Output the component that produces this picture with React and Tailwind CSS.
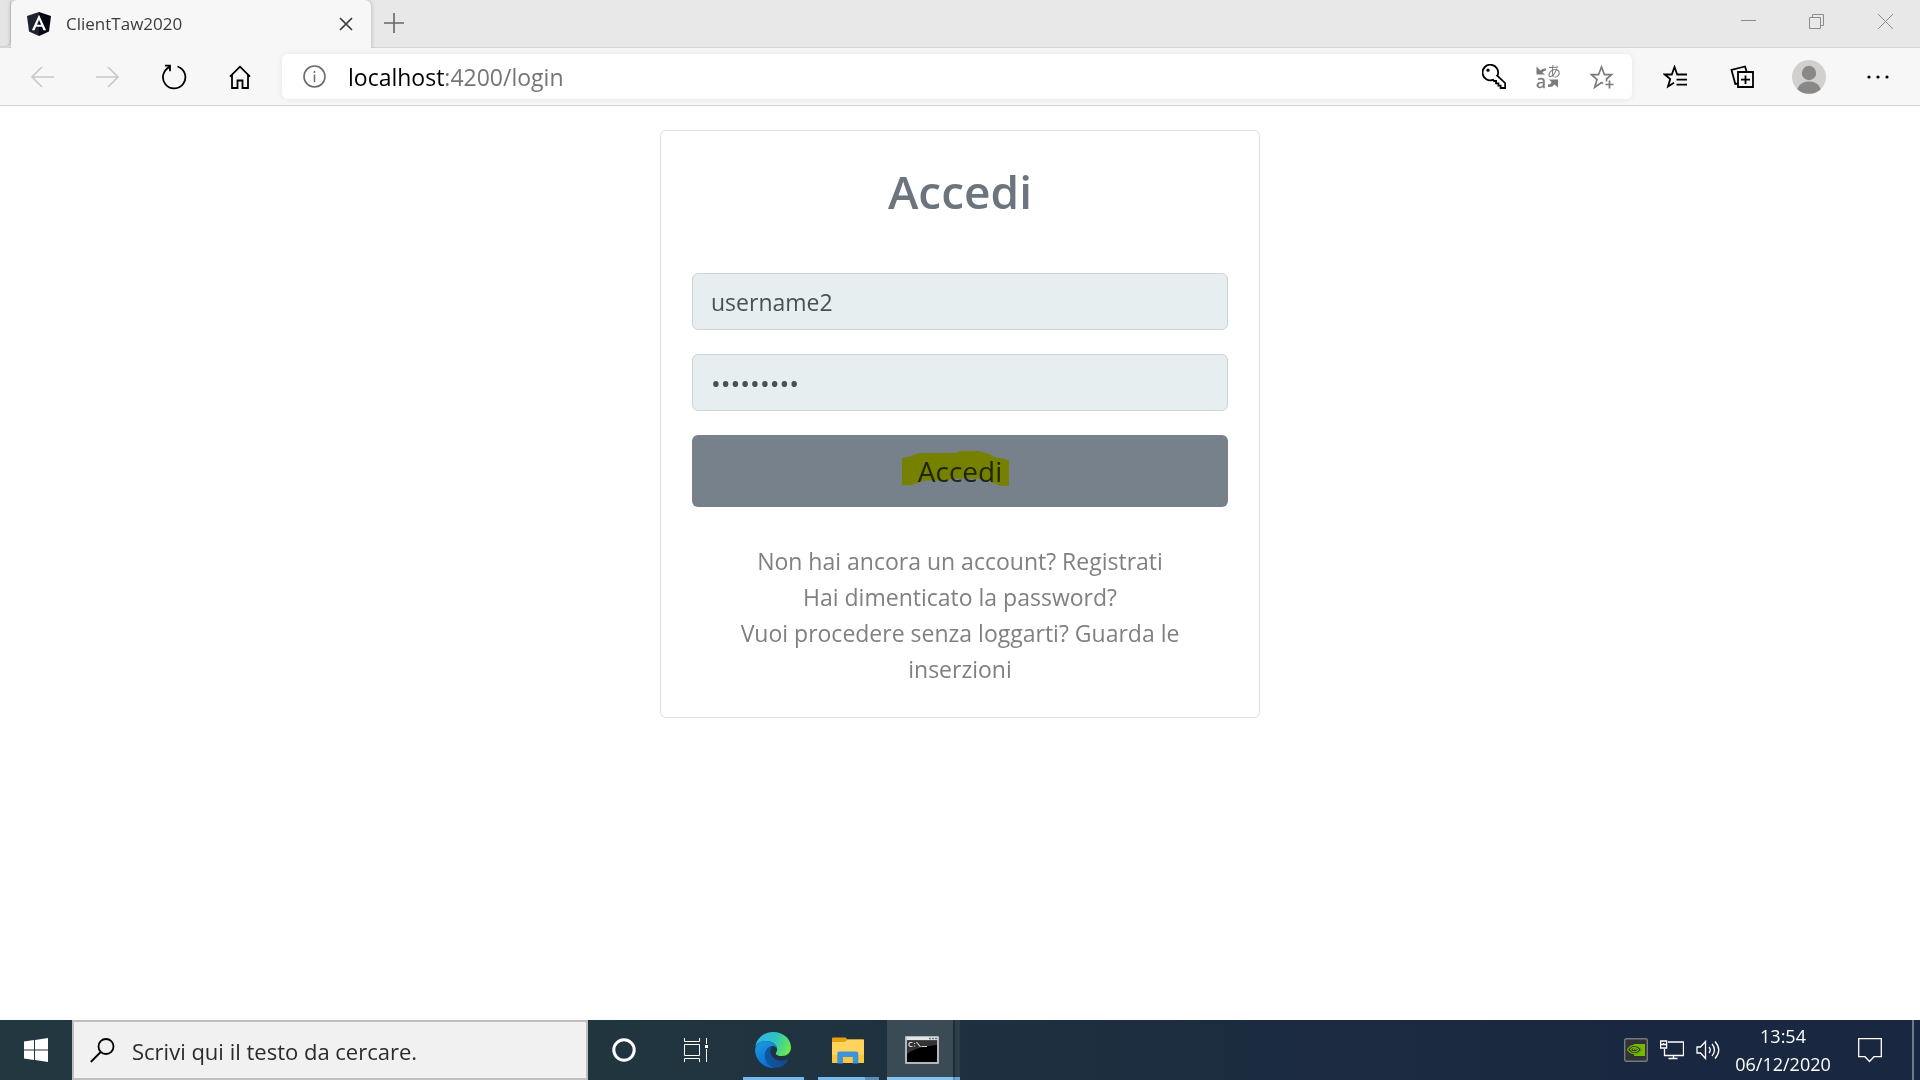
const iconButton = "flex h-[45px] items-center justify-center";

function Stroke({ w, h, width = 2, className = "", children }) {
  return (
    <svg
      width={w}
      height={h}
      viewBox={`0 0 ${w} ${h}`}
      fill="none"
      stroke="currentColor"
      strokeWidth={width}
      className={className}
      aria-hidden="true"
    >
      {children}
    </svg>
  );
}

function AngularLogo() {
  return (
    <svg width="24" height="24" viewBox="0 0 24 24" aria-hidden="true">
      <path d="M12 0 0 4l2 15.500L12 24z" fill="#1d2230" />
      <path d="M12 0 24 4l-2 15.500L12 24z" fill="#050711" />
      <path d="M12 2.800 4.900 18.200h2.700l1.400-3.500h6l1.400 3.500h2.700zm0 5 2.100 4.900H9.900z" fill="#fff" />
    </svg>
  );
}

function TitleBar() {
  return (
    <header className="flex h-12 items-stretch border-b border-[#d6d6d6] bg-[#e8e8e8]">
      <div className="h-[47px] w-[11px] rounded-br-md border-r border-b border-[#cfcfcf] bg-[#e4e4e4]" />
      <div className="-mb-px flex w-[360px] items-center rounded-t-md bg-[#f7f7f7] pr-[18px] pl-4 shadow-[0_0_4px_rgba(0,0,0,0.25)] [clip-path:inset(0_-5px_0_-5px)]">
        <AngularLogo />
        <span className="ml-[15px] flex-1 text-[17px] text-[#3c3c3c]">ClientTaw2020</span>
        <button type="button" aria-label="Chiudi scheda" className="text-[#3a3a3a]">
          <Stroke w={14} h={14} width={1.700}>
            <path d="m1 1 12 12M13 1 1 13" />
          </Stroke>
        </button>
      </div>
      <button type="button" aria-label="Nuova scheda" className="px-[13px] pb-0.5 text-[#666]">
        <Stroke w={20} h={20} width={1.600}>
          <path d="M10 0v20M0 10h20" />
        </Stroke>
      </button>
      <div className="flex-1" />
      <div className="mb-1 flex items-center text-[#8c8c8c]">
        <button type="button" aria-label="Riduci a icona" className="flex w-[68px] justify-center pb-0.5">
          <Stroke w={15} h={1}>
            <path d="M0 .5h15" />
          </Stroke>
        </button>
        <button type="button" aria-label="Ripristina" className="flex w-[68px] justify-center">
          <Stroke w={15} h={15} width={1}>
            <path d="M.5 3.500h11v11H.5zM3.500 3.500v-3h11v11h-3" />
          </Stroke>
        </button>
        <button type="button" aria-label="Chiudi" className="flex w-[70px] justify-center">
          <Stroke w={15} h={15} width={1}>
            <path d="m0 0 15 15M15 0 0 15" />
          </Stroke>
        </button>
      </div>
    </header>
  );
}

function AddressBar() {
  return (
    <div className="flex h-[45px] flex-1 items-center rounded-md bg-white pr-[18px] pl-[21px] shadow-[0_0_6px_rgba(0,0,0,0.08)]">
      <Stroke w={23} h={23} className="text-[#6b6b6b]">
        <circle cx="11.500" cy="11.500" r="10.500" strokeWidth="1.600" />
        <path d="M11.500 9.500v7.500M11.500 6v2" strokeWidth="1.500" />
      </Stroke>
      <a href="#login" className="ml-[22px] flex-1 pt-0.5 text-[23px] text-[#757575]">
        <span className="text-black">localhost</span>:4200/login
      </a>
      <div className="flex items-center gap-[30px]">
        <button type="button" aria-label="Password salvate">
          <Stroke w={24} h={25} width={1.800}>
            <path d="M15.600 11.300a7.800 7.800 0 1 0-4.500 4.500l1 1.200h2v2.400h2.300v2.300h2.200V24h4.600v-4.800l-8-7.600z" />
            <circle cx="6" cy="6.200" r="1.600" fill="currentColor" stroke="none" />
          </Stroke>
        </button>
        <button type="button" aria-label="Traduci" className="text-[#7b7b7b]">
          <svg width="24" height="26" viewBox="0 0 24 26" fill="currentColor" className="overflow-visible" aria-hidden="true">
            <text x="11" y="12" fontSize="14" fontFamily="'Noto Sans CJK JP', sans-serif">あ</text>
            <text x="0" y="24" fontSize="18" fontFamily="'Open Sans', sans-serif" stroke="currentColor" strokeWidth=".4">a</text>
            <path d="M.5 2.500V10.500h8.500L6.500 8.500Q7.500 6.500 10 6.500V4.500Q6.500 4 4.500 6.500zM22 23.500v-8h-9l2.500 2.500Q15 20.500 12 20.500v2.500q4.500.5 6.500-2.500z" />
          </svg>
        </button>
        <button type="button" aria-label="Aggiungi ai preferiti" className="text-[#7b7b7b]">
          <Stroke w={24} h={24} width={1.700}>
            <path d="M13 18.500 11.500 17.500 4.700 22.300 7 14.500 1.500 9.700h7L11.500 2l3 7.700h7L16.500 14v2.500" />
            <path d="M19.500 15.500v8M15.500 19.500h8" />
          </Stroke>
        </button>
      </div>
    </div>
  );
}

function Toolbar() {
  return (
    <nav aria-label="Navigazione" className="flex h-[58px] items-center border-b border-[#cfcfcf] bg-[#f7f7f7] pl-[9px] text-black">
      <button type="button" aria-label="Indietro" className={`${iconButton} w-[66px] text-[#c9c9c9]`}>
        <Stroke w={24} h={22} width={1.700}>
          <path d="M24 11H2M12 1 2 11l10 10" />
        </Stroke>
      </button>
      <button type="button" aria-label="Avanti" className={`${iconButton} w-[66px] text-[#c9c9c9]`}>
        <Stroke w={24} h={22} width={1.700}>
          <path d="M0 11h22M12 1l10 10-10 10" />
        </Stroke>
      </button>
      <button type="button" aria-label="Aggiorna" className={`${iconButton} w-[66px]`}>
        <Stroke w={26} h={26} width={1.800}>
          <path d="M16.500 2.500a11.200 11.200 0 1 1-7.500.3M4 1.700h5v5.600" />
        </Stroke>
      </button>
      <button type="button" aria-label="Pagina iniziale" className={`${iconButton} w-[66px]`}>
        <Stroke w={22} h={24} width={1.800}>
          <path d="M1 11.700 11 1.700l10 10M3 9.800V23h5.500v-7.500h5V23H19V9.800" />
        </Stroke>
      </button>
      <div className="ml-[9px] flex flex-1">
        <AddressBar />
      </div>
      <div className="flex items-center pr-[7px] pl-[9px]">
        <button type="button" aria-label="Preferiti" className={`${iconButton} w-[68px]`}>
          <Stroke w={24} h={24} width={1.800}>
            <path d="M11 17.700 5 21.500 7.200 14 1.800 9.500h7L11.500 2l2.700 7.500M13.500 9.500H24M13.500 14.700H24M13.500 19.700H24" />
          </Stroke>
        </button>
        <button type="button" aria-label="Raccolte" className={`${iconButton} w-[66px]`}>
          <Stroke w={24} h={24} width={1.800}>
            <path d="M8 7h15v15H8zM15.500 10.500v8.500M11 14.700h9M16.500 6 15 1.500 1.500 5 5.300 19 8 18.500" />
          </Stroke>
        </button>
        <button type="button" aria-label="Profilo" className={`${iconButton} w-[68px]`}>
          <svg width="34" height="34" viewBox="0 0 34 34" aria-hidden="true">
            <circle cx="17" cy="17" r="17" fill="#d2d0ce" />
            <circle cx="17" cy="13" r="7.200" fill="#8a8886" />
            <path d="M5.300 29.200C7 24 11.500 21.500 17 21.500S27 24 28.700 29.200A17 17 0 0 1 5.300 29.200z" fill="#8a8886" />
          </svg>
        </button>
        <button type="button" aria-label="Altro" className={`${iconButton} w-[70px]`}>
          <svg width="22" height="4" viewBox="0 0 22 4" aria-hidden="true">
            <circle cx="2" cy="2" r="1.600" />
            <circle cx="11" cy="2" r="1.600" />
            <circle cx="20" cy="2" r="1.600" />
          </svg>
        </button>
      </div>
    </nav>
  );
}

const field =
  "h-[57px] w-full rounded-md border border-[#ced4da] bg-[#e6eeef] px-[18px] text-[#495057] outline-none";

function LoginCard() {
  return (
    <section className="w-[600px] rounded-md border border-[#dfdfdf] bg-white px-[31px] pt-[30px] pb-[30px]">
      <h1 className="text-center text-[46px] leading-[60px] font-semibold text-[#6c757d]">Accedi</h1>
      <form className="mt-[52px] flex flex-col gap-6" onSubmit={(e) => e.preventDefault()}>
        <input type="text" aria-label="Username" defaultValue="username2" className={`${field} text-[23px]`} />
        <input type="password" aria-label="Password" defaultValue="password2" className={`${field} text-[26px]`} />
        <button type="submit" className="h-[72px] w-full rounded-md bg-[#76818c] text-[28px] text-[#212529]">
          <span className="relative inline-block">
            Accedi
            <svg
              width="107"
              height="35"
              viewBox="0 0 107 35"
              className="absolute top-px -left-4 mix-blend-multiply"
              aria-hidden="true"
            >
              <path
                d="M0 7 8 5.500 13 3.500 18 2h35l5-2h19l9 2.500 8 4 7 1 6 2v26h-8l-6-3-7-3-12-2H52l-6 2H23l-9 3-5 1.500-9 .5z"
                fill="#ff0"
              />
            </svg>
          </span>
        </button>
      </form>
      <div className="mt-9 px-6 text-center text-[23px] leading-9 text-[#808080]">
        <p>
          <a href="#registrati">Non hai ancora un account? Registrati</a>
        </p>
        <p>
          <a href="#password">Hai dimenticato la password?</a>
        </p>
        <p>
          <a href="#inserzioni">Vuoi procedere senza loggarti? Guarda le inserzioni</a>
        </p>
      </div>
    </section>
  );
}

function EdgeLogo() {
  return (
    <svg width="36" height="36" viewBox="0 0 36 36" aria-hidden="true">
      <defs>
        <linearGradient id="edgeTop" x1="0" y1="0.300" x2="1" y2="0.600">
          <stop offset="0" stopColor="#2fb4ec" />
          <stop offset="0.500" stopColor="#2cc4c0" />
          <stop offset="1" stopColor="#6bea4c" />
        </linearGradient>
        <linearGradient id="edgeLeft" x1="0" y1="0" x2="0.500" y2="1">
          <stop offset="0" stopColor="#1b9de2" />
          <stop offset="1" stopColor="#0a6fd0" />
        </linearGradient>
        <linearGradient id="edgeDark" x1="0" y1="0" x2="1" y2="0">
          <stop offset="0" stopColor="#0c59a4" />
          <stop offset="1" stopColor="#114a8b" />
        </linearGradient>
      </defs>
      <path d="M.3 15C1.500 6 9 0 18 0c10.500 0 18 7 18 15.500C36 20.500 32 24 27 24c-4 0-6.200-1.200-6.200-2.600 0-1 1.400-1.700 1.400-4.200 0-4.500-5-8.200-11-8.200C5.500 9 1.500 11.500.3 15z" fill="url(#edgeTop)" />
      <path d="M.1 18C.1 12.500 5 9 11.200 9c6.300 0 11 3.800 11 8.200-1-2.300-3-3.500-5-3.200-4.500.7-7.200 5-7.200 9.500 0 5.500 3.500 10.300 9.500 12.400C9 36.600.1 28 .1 18z" fill="url(#edgeLeft)" />
      <path d="M17.500 14C13 15 10 19 10 23.500c0 6.500 4.500 12 11 12.200 5 .1 9.500-3.200 12-7.500.5-.9-.2-1.400-1-.9C25 31 15.500 27 15.500 19.500c0-2.500.8-4.500 2-5.500z" fill="url(#edgeDark)" />
    </svg>
  );
}

function FolderIcon() {
  return (
    <svg width="32" height="27" viewBox="0 0 32 27" aria-hidden="true">
      <path d="M0 1.500Q0 .5 1 .5h12.500l2 2H32V8H0z" fill="#e5a00d" />
      <path d="M0 5h13l2.500-2.500H31q1 0 1 1V25q0 1-1 1H1q-1 0-1-1z" fill="#ffd35c" />
      <path d="M0 18h32v7q0 1-1 1H1q-1 0-1-1z" fill="#fbc73b" />
      <path d="M5.300 26.500V16.500q0-2 2-2h17q2 0 2 2v10h-5.500V20H11v6.500z" fill="#3b94dc" />
    </svg>
  );
}

function TerminalIcon() {
  return (
    <svg width="34" height="28" viewBox="0 0 34 28" aria-hidden="true">
      <rect width="34" height="28" rx="1" fill="#b4b8bb" />
      <path d="M1.500 1h31v3h-31z" fill="#e3e6e8" />
      <path d="M24 1.700h2v1.500h-2zm3 0h2v1.500h-2zm3 0h2v1.500h-2z" fill="#64727c" />
      <path d="M2 4.500h30V26H2z" fill="#000" />
      <path d="M2 4.500h30V9C18 10 8 13 2 18z" fill="#333" />
      <path d="M7.500 6.500H5l-1 1v2l1 1h2.500M9.500 7v1M9.500 9.500v1M11.500 6l4 5M16.500 10.500H22" fill="none" stroke="#d5d5d5" strokeWidth="1.200" />
    </svg>
  );
}

function Taskbar() {
  return (
    <footer className="flex h-[60px] items-stretch bg-linear-to-r from-[#22373f] from-25% to-[#1a2740] to-85% text-white">
      <button type="button" aria-label="Start" className="flex w-[72px] items-center justify-center">
        <svg width="24" height="24" viewBox="0 0 24 24" fill="#fff" aria-hidden="true">
          <path d="M0 3.500 10 2v9.500H0zM11 1.900 24 0v11.500H11zM0 12.500h10V22L0 20.500zM11 12.500h13V24L11 22.100z" />
        </svg>
      </button>
      <label className="flex w-[516px] items-center border-2 border-[#bfbfbf] bg-[#f1f1f1] pl-4 text-black">
        <Stroke w={25} h={25} width={1.800}>
          <circle cx="16" cy="8.500" r="7.500" />
          <path d="M10.700 14 .8 24" />
        </Stroke>
        <input
          type="text"
          aria-label="Cerca"
          placeholder="Scrivi qui il testo da cercare."
          className="ml-[17px] h-full min-w-0 flex-1 pt-0.5 text-[22px] outline-none placeholder:text-[#2b2b2b] placeholder:opacity-100"
        />
      </label>
      <button type="button" aria-label="Cortana" className="flex w-[72px] items-center justify-center">
        <Stroke w={24} h={24} width={3}>
          <circle cx="12" cy="12" r="10.200" />
        </Stroke>
      </button>
      <button type="button" aria-label="Visualizzazione attività" className="flex w-[72px] items-center justify-center">
        <Stroke w={24} h={24} width={1}>
          <path d="M.5 0v3.500h15V0M.5 24v-3.500h15V24M.5 6.500h15v11H.5zM22.500 0v6M22.500 11v13" />
          <path d="M21 7h3v3h-3z" fill="currentColor" stroke="none" />
        </Stroke>
      </button>
      <button type="button" aria-label="Microsoft Edge" className="ml-[11px] flex w-[61px] items-center justify-center border-b-3 border-[#76b9ed] pt-0.5 pr-0.5">
        <EdgeLogo />
      </button>
      <button type="button" aria-label="Esplora file" className="ml-3.5 flex">
        <span className="flex h-full w-[47px] items-center justify-center border-b-3 border-[#76b9ed] pt-1 pl-[13px]">
          <FolderIcon />
        </span>
        <span className="h-full w-3.5 border-b-3 border-[#5b8db5]" />
      </button>
      <button type="button" aria-label="Prompt dei comandi" className="ml-2 flex">
        <span className="flex h-full w-[66px] items-center justify-center border-b-3 border-[#84c3f2] bg-[#3a4b56] pt-0.5 pl-1">
          <TerminalIcon />
        </span>
        <span className="h-full w-0.5 border-b-3 border-[#5b8db5] bg-[#1f2d36]" />
        <span className="h-full w-[5px] border-b-3 border-[#6ba5d2] bg-[#2e3e49]" />
      </button>
      <div className="flex-1" />
      <div className="flex items-center gap-3">
        <button type="button" aria-label="Impostazioni NVIDIA">
          <svg width="24" height="24" viewBox="0 0 24 24" aria-hidden="true">
            <rect x=".7" y=".7" width="22.600" height="22.600" rx="1.500" fill="#303234" stroke="#73797e" strokeWidth="1.400" />
            <path d="M10 6h11v12H10z" fill="#76b900" />
            <path d="M3.500 11.500C6 8 9.500 7 12 7.500c3 .5 5 2.500 6 4-2 3-5 5-8 4.700-3.500-.4-5.500-2.700-6.500-4.700z" fill="#303234" />
            <path d="M3.500 11.500C6 8 9.500 7 12 7.700c2.700.7 4.500 2.300 5.500 3.800-2 2.700-4.800 4.500-7.500 4.200-3-.4-5.500-2.200-6.500-4.200zM6.500 11.500c1.500-2 4-2.500 6-1.500 1 .5 1.800 1.200 2 1.700-1 1.300-2.500 2.300-4.300 2.100-1.700-.2-3-1.200-3.700-2.300zM9 11.700q2-1.700 3.500 0" fill="none" stroke="#76b900" strokeWidth="1.200" />
          </svg>
        </button>
        <button type="button" aria-label="Rete">
          <Stroke w={24} h={20} width={1.300}>
            <path d="M8 2h15.500v13.500h-19V9M.6 1h6v7h-6zM.6 4.500h6M3.500 3v2M13.500 15.500v3M8.500 18.500h9" />
          </Stroke>
        </button>
        <button type="button" aria-label="Volume">
          <Stroke w={24} h={20} width={1.300}>
            <path d="M1 7h3.500L9.500 1.500v17L4.500 13H1zM13 7q2.500 3 0 6M16 4q5 6 0 12M19 1.500q7.500 8.500 0 17" />
          </Stroke>
        </button>
      </div>
      <button type="button" className="ml-4 flex w-[94px] flex-col items-center justify-center text-[18px] leading-7 whitespace-nowrap">
        <time>13:54</time>
        <time>06/12/2020</time>
      </button>
      <button type="button" aria-label="Centro notifiche" className="ml-7 flex items-center">
        <Stroke w={24} h={25} width={1.300}>
          <path d="M.7.700h22.600v18H16L11.500 23.500 7 18.700H.7z" />
        </Stroke>
      </button>
      <button type="button" aria-label="Mostra desktop" className="ml-[30px] w-2 border-l-2 border-[#6d7889]" />
    </footer>
  );
}

export default function App() {
  return (
    <div className="flex min-h-screen flex-col bg-white font-['Open_Sans','Noto_Sans_CJK_JP',sans-serif]">
      <TitleBar />
      <Toolbar />
      <main className="flex flex-1 items-start justify-center pt-6">
        <LoginCard />
      </main>
      <Taskbar />
    </div>
  );
}
